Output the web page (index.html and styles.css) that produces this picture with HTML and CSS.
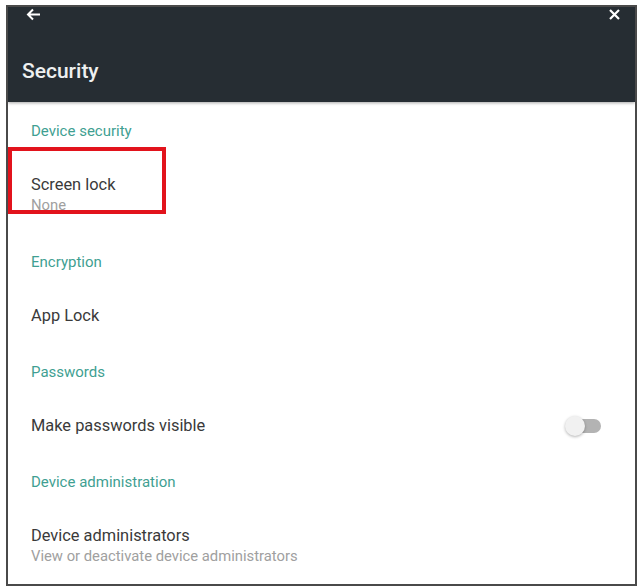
FILE: index.html
```html
<!DOCTYPE html>
<html>
<head>
<meta charset="utf-8">
<link rel="stylesheet" href="styles.css">
</head>
<body>
<div class="frame">
  <header class="appbar">
    <div class="topbar">
      <svg class="icon-back" width="15" height="13" viewBox="0 0 15 13"><path d="M14 6.5H2.5M7 1.5L2 6.5l5 5" fill="none" stroke="#fff" stroke-width="2"/></svg>
      <svg class="icon-close" width="11" height="11" viewBox="0 0 11 11"><path d="M1 1l9 9M10 1l-9 9" fill="none" stroke="#fff" stroke-width="2.2"/></svg>
    </div>
    <h1 class="title">Security</h1>
  </header>
  <main class="list">
    <div class="section">Device security</div>
    <div class="row row-two highlight-wrap">
      <div class="row-title">Screen lock</div>
      <div class="row-sub">None</div>
      <div class="highlight"></div>
    </div>
    <div class="section">Encryption</div>
    <div class="row">
      <div class="row-title">App Lock</div>
    </div>
    <div class="section">Passwords</div>
    <div class="row row-switch">
      <div class="row-title">Make passwords visible</div>
      <div class="switch"><span class="track"></span><span class="thumb"></span></div>
    </div>
    <div class="section">Device administration</div>
    <div class="row row-two">
      <div class="row-title">Device administrators</div>
      <div class="row-sub">View or deactivate device administrators</div>
    </div>
  </main>
</div>
</body>
</html>
```

FILE: styles.css
```css
* { box-sizing: border-box; }
html, body { margin: 0; padding: 0; background: #fff; }
body { font-family: Roboto, "Liberation Sans", sans-serif; }

.frame {
  margin: 5px 0 0 6px;
  width: 631px;
  height: 581px;
  border: 2px solid #4a4a4a;
  display: flex;
  flex-direction: column;
  overflow: hidden;
}

.appbar {
  background: #262d33;
  height: 95px;
  flex: none;
  display: flex;
  flex-direction: column;
  box-shadow: 0 1px 3px rgba(0,0,0,0.35);
  position: relative;
  z-index: 1;
}
.topbar {
  height: 15px;
  display: flex;
  align-items: center;
  justify-content: space-between;
  padding: 0 15px 0 18px;
}
.title {
  margin: 37px 0 0 14px;
  font-size: 21px;
  line-height: 24px;
  font-weight: 500;
  color: #eef0f0;
}

.list { display: flex; flex-direction: column; }

.section {
  height: 55px;
  display: flex;
  align-items: center;
  padding: 2px 0 0 23px;
  font-size: 15px;
  font-weight: 400;
  color: #3f9f92;
}

.row {
  height: 55px;
  display: flex;
  flex-direction: column;
  justify-content: center;
  padding-left: 23px;
}
.row-two { height: 76px; }
.row-title {
  font-size: 16.4px;
  line-height: 20px;
  color: #3a3a3a;
}
.row-sub {
  font-size: 14.8px;
  line-height: 20px;
  color: #a0a0a0;
}

.highlight-wrap { position: relative; }
.highlight {
  position: absolute;
  left: 0;
  top: -10px;
  width: 158px;
  height: 67px;
  border: 4px solid #e2131c;
}

.row-switch {
  flex-direction: row;
  align-items: center;
  justify-content: space-between;
  padding-right: 34px;
}
.switch {
  position: relative;
  width: 36px;
  height: 20px;
}
.switch .track {
  position: absolute;
  left: 6px;
  top: 3px;
  width: 30px;
  height: 14px;
  border-radius: 7px;
  background: #b3b3b3;
}
.switch .thumb {
  position: absolute;
  left: 0;
  top: 0;
  width: 20px;
  height: 20px;
  border-radius: 50%;
  background: #f1f1f1;
  box-shadow: 0 1px 3px rgba(0,0,0,0.3);
}
```
